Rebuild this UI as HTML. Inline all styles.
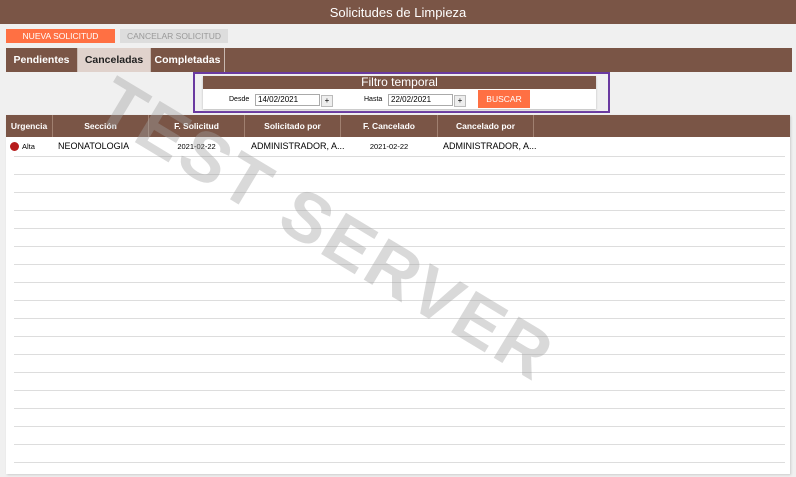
<!DOCTYPE html>
<html><head><style>
body{margin:0;width:796px;height:477px;background:#f0f0f0;font-family:"Liberation Sans",Verdana,sans-serif;position:relative;overflow:hidden}
.top{position:absolute;left:0;top:0;width:796px;height:24px;background:#7a5546;color:#fff;font-size:13px;text-align:center;line-height:25px}
.btn{position:absolute;top:29px;height:14px;font-size:8.5px;line-height:14px;text-align:center}
.tabs{position:absolute;left:6px;top:48px;width:786px;height:24px;background:#7a5546}
.tab{position:absolute;top:0;height:24px;line-height:24px;font-size:10.5px;font-weight:bold;color:#fff;text-align:center;border-right:1px solid #c8b8b0}
.filter{position:absolute;left:193px;top:72px;width:417px;height:41px;border:2px solid #6a3aa0;box-sizing:border-box}
.fin{position:absolute;left:203px;top:76px;width:393px;height:33px;background:#fff;box-shadow:0 1px 2px #bbb}
.fh{height:13px;background:#7a5546;color:#fff;font-size:12px;text-align:center;line-height:13px}
.inp{position:absolute;top:94px;height:10px;border:1px solid #aaa;background:#fff;font-size:8px;line-height:10px;padding-left:2px}
.plus{position:absolute;top:95px;width:10px;height:10px;border:1px solid #bbb;background:#eee;font-size:8px;line-height:10px;text-align:center}
.lbl{position:absolute;top:96px;font-size:7px}
.table{position:absolute;left:6px;top:115px;width:784px;height:359px;background:#fff;box-shadow:1px 1px 2px #ccc}
.th{position:absolute;top:0;height:22px;background:#7a5546;width:784px}
.hc{position:absolute;top:0;height:22px;line-height:22px;color:#fff;font-size:8.5px;font-weight:bold;text-align:center;border-right:1px solid #a08070}
.line{position:absolute;left:8px;width:771px;height:1px;background:#ddd}
.cell{position:absolute;top:22px;height:19px;line-height:19px;font-size:9px}
.wm{position:absolute;left:46px;top:189px;font-size:70px;font-weight:bold;color:rgba(160,160,160,.4);transform:rotate(31deg);transform-origin:center;white-space:nowrap;letter-spacing:3px;width:560px;text-align:center}
</style></head><body>
<div class="top">Solicitudes de Limpieza</div>
<div class="btn" style="left:6px;width:109px;background:#ff7043;color:#fff">NUEVA SOLICITUD</div>
<div class="btn" style="left:120px;width:108px;background:#ddd;color:#999">CANCELAR SOLICITUD</div>
<div class="tabs">
<div class="tab" style="left:0;width:71px">Pendientes</div>
<div class="tab" style="left:72px;width:72px;background:#e0d2cc;color:#222">Canceladas</div>
<div class="tab" style="left:145px;width:73px">Completadas</div>
</div>
<div class="filter"></div>
<div class="fin"><div class="fh">Filtro temporal</div></div>
<div class="lbl" style="left:229px">Desde</div>
<div class="inp" style="left:255px;width:61px">14/02/2021</div>
<div class="plus" style="left:321px">+</div>
<div class="lbl" style="left:364px">Hasta</div>
<div class="inp" style="left:388px;width:61px">22/02/2021</div>
<div class="plus" style="left:454px">+</div>
<div style="position:absolute;left:478px;top:90px;width:52px;height:18px;background:#ff7043;color:#fff;font-size:8.5px;line-height:18px;text-align:center">BUSCAR</div>
<div class="table">
<div class="th">
<div class="hc" style="left:0;width:46px">Urgencia</div>
<div class="hc" style="left:47px;width:95px">Sección</div>
<div class="hc" style="left:143px;width:95px">F. Solicitud</div>
<div class="hc" style="left:239px;width:95px">Solicitado por</div>
<div class="hc" style="left:335px;width:96px">F. Cancelado</div>
<div class="hc" style="left:432px;width:95px">Cancelado por</div>
</div>
<div style="position:absolute;left:4px;top:27px;width:9px;height:9px;border-radius:50%;background:#b71c1c"></div>
<div class="cell" style="left:16px;font-size:7.5px">Alta</div>
<div class="cell" style="left:52px">NEONATOLOGIA</div>
<div class="cell" style="left:143px;width:95px;text-align:center;font-size:7.5px">2021-02-22</div>
<div class="cell" style="left:245px">ADMINISTRADOR, A...</div>
<div class="cell" style="left:335px;width:96px;text-align:center;font-size:7.5px">2021-02-22</div>
<div class="cell" style="left:437px">ADMINISTRADOR, A...</div>
<div class="line" style="top:41px"></div><div class="line" style="top:59px"></div><div class="line" style="top:77px"></div><div class="line" style="top:95px"></div><div class="line" style="top:113px"></div><div class="line" style="top:131px"></div><div class="line" style="top:149px"></div><div class="line" style="top:167px"></div><div class="line" style="top:185px"></div><div class="line" style="top:203px"></div><div class="line" style="top:221px"></div><div class="line" style="top:239px"></div><div class="line" style="top:257px"></div><div class="line" style="top:275px"></div><div class="line" style="top:293px"></div><div class="line" style="top:311px"></div><div class="line" style="top:329px"></div><div class="line" style="top:347px"></div>
</div>
<div class="wm">TEST SERVER</div>
</body></html>
